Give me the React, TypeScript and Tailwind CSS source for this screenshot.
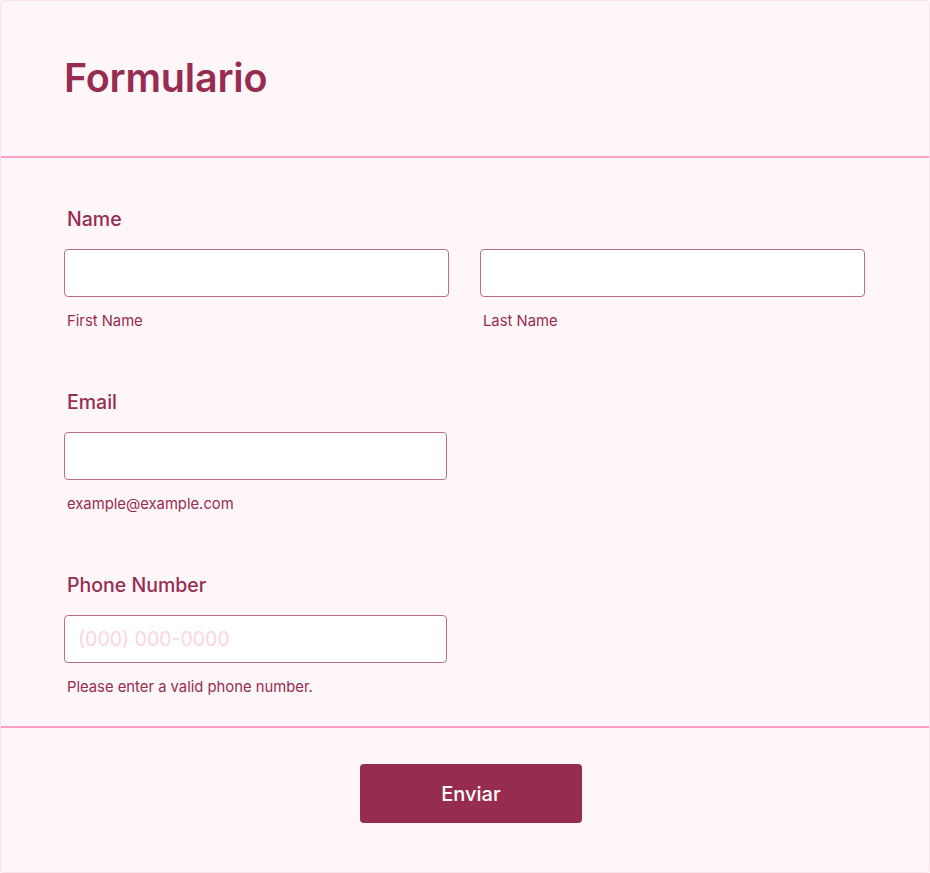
import React from 'react';

const font = { fontFamily: 'Inter, "Noto Sans", sans-serif' };

function Field({
  label,
  sub,
  placeholder,
  wide,
}: {
  label: string;
  sub: string;
  placeholder?: string;
  wide?: boolean;
}) {
  return (
    <div className={wide ? 'w-[385px]' : 'w-[383px]'}>
      <input
        placeholder={placeholder}
        aria-label={label}
        className="block h-12 w-full rounded-[4px] border border-[#bb6e8a] bg-white px-[13px] text-[19.5px] text-[#972c51] outline-none placeholder:text-[#fcd5e3]"
      />
      <p className="mt-[14px] pl-[3px] text-[14.8px] leading-5 text-[#972c51]">{sub}</p>
    </div>
  );
}

export default function App() {
  return (
    <div style={font} className="h-[873px] w-[930px] overflow-hidden">
      <div className="flex h-full flex-col rounded-[3px] border border-[#f9e3ec] bg-[#fff6f9]">
        <header className="flex h-[157px] shrink-0 items-center border-b-2 border-[#ff9fc4] px-[63px]">
          <h1 className="text-[39.5px] font-semibold tracking-[-0.2px] text-[#972c51]">Formulario</h1>
        </header>

        <main className="flex flex-col gap-[59px] border-b-2 border-[#ff9fc4] px-[63px] pt-[49px] pb-[29px]">
          <section>
            <h2 className="mb-[18px] pl-[3px] text-[19.5px] leading-6 font-medium text-[#972c51]">Name</h2>
            <div className="flex gap-[31px]">
              <Field label="First Name" sub="First Name" wide />
              <Field label="Last Name" sub="Last Name" wide />
            </div>
          </section>

          <section>
            <h2 className="mb-[18px] pl-[3px] text-[19.5px] leading-6 font-medium text-[#972c51]">Email</h2>
            <Field label="Email" sub="example@example.com" />
          </section>

          <section>
            <h2 className="mb-[18px] pl-[3px] text-[19.5px] leading-6 font-medium text-[#972c51]">Phone Number</h2>
            <Field label="Phone Number" sub="Please enter a valid phone number." placeholder="(000) 000-0000" />
          </section>
        </main>

        <footer className="flex justify-center pt-[36px]">
          <button className="ml-[12px] h-[59px] w-[222px] rounded-[4px] bg-[#972c51] text-[20px] font-medium text-white">
            Enviar
          </button>
        </footer>
      </div>
    </div>
  );
}
